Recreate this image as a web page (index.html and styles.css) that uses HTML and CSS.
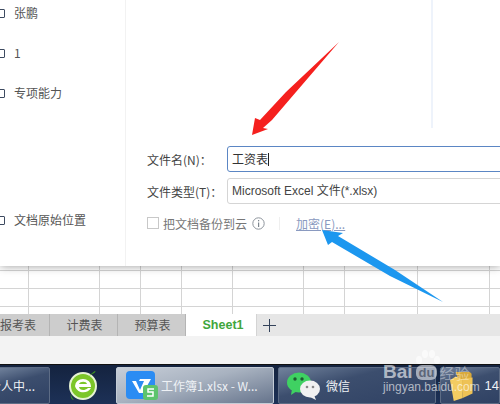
FILE: index.html
```html
<!DOCTYPE html>
<html lang="zh-CN">
<head>
  <meta charset="UTF-8">
  <meta name="viewport" content="width=device-width, initial-scale=1.0">
  <title>工资表</title>
  <link rel="stylesheet" href="styles.css">
</head>
<body>
  <div class="dialog">
    <ul class="places">
      <li class="place"><span class="box"></span>张鹏</li>
      <li class="place"><span class="box"></span>1</li>
      <li class="place"><span class="box"></span>专项能力</li>
      <li class="place place-last"><span class="box"></span>文档原始位置</li>
    </ul>
    <div class="save-panel">
      <div class="preview"></div>
      <div class="form-row">
        <label class="form-label">文件名(N)：</label>
        <div class="field field-active">工资表<span class="caret"></span></div>
      </div>
      <div class="form-row">
        <label class="form-label">文件类型(T)：</label>
        <div class="field field-type">Microsoft Excel 文件(*.xlsx)</div>
      </div>
      <div class="options">
        <span class="check"></span>
        <span class="check-label">把文档备份到云</span>
        <svg class="info" width="13" height="13" viewBox="0 0 13 13">
          <circle cx="6.5" cy="6.5" r="5.7" fill="none" stroke="#8d949c" stroke-width="1"/>
          <rect x="6" y="5.5" width="1.2" height="4.5" fill="#7d858e"/>
          <rect x="6" y="3" width="1.2" height="1.3" fill="#7d858e"/>
        </svg>
        <span class="divider"></span>
        <a class="encrypt" href="#">加密(E)...</a>
      </div>
    </div>
  </div>

  <div class="grid">
    <div class="col col-a"></div>
    <div class="col col-b"></div>
    <div class="col col-c"></div>
    <div class="col col-d"></div>
    <div class="col col-e"></div>
    <div class="col col-f"></div>
    <div class="col col-g"></div>
    <div class="col col-h"></div>
    <div class="col col-i"></div>
    <div class="col col-j"></div>
  </div>

  <div class="tabs">
    <div class="tab tab-1">报考表</div>
    <div class="tab tab-2">计费表</div>
    <div class="tab tab-3">预算表</div>
    <div class="tab tab-active">Sheet1</div>
    <div class="tab-add">
      <svg width="13" height="13" viewBox="0 0 13 13">
        <path d="M6.5 0v13M0 6.5h13" stroke="#33425a" stroke-width="1"/>
      </svg>
    </div>
  </div>
  <div class="status"></div>

  <div class="taskbar">
    <div class="task task-first">个人中...</div>
    <div class="quick">
      <svg width="30" height="32" viewBox="0 0 30 32">
        <circle cx="15" cy="16" r="13" fill="#7cc629"/>
        <circle cx="15" cy="16" r="13" fill="none" stroke="#e6f3d4" stroke-width="2"/>
        <path d="M7 16a8 7 0 0 1 16 0v1H11c.5 3 5 4.500 9 1h3c-3 6-14 6-16-2zM11 14h8c-.5-3-7-3-8 0z" fill="#fff"/>
        <path d="M27 1c2 1-3 3-6 5 2-2 4-4 6-5zM3 24c-1 3 1 6 3 6-1-1-3-3-3-6z" fill="#3d9a1e"/>
      </svg>
    </div>
    <div class="task task-active">
      <svg class="wps" width="32" height="30" viewBox="0 0 32 30">
        <rect x="0" y="0" width="29" height="28" rx="4" fill="#2b8cf3"/>
        <path d="M6 10h4l4 9 4-9h-5l1-2h11l-8 14h-4z" fill="#fff"/>
        <rect x="17" y="14" width="15" height="15" rx="3" fill="#5cc46c"/>
        <path d="M28 18h-6v3h5v4h-6" fill="none" stroke="#fff" stroke-width="1.500"/>
      </svg>
      <span>工作簿1.xlsx - W...</span>
    </div>
    <div class="task task-chat">
      <svg width="33" height="28" viewBox="0 0 33 28">
        <ellipse cx="12" cy="10.500" rx="12" ry="10" fill="#3fd162"/>
        <path d="M5 17l-1 6 6-4z" fill="#3fd162"/>
        <circle cx="8" cy="7" r="1.700" fill="#1d5a31"/>
        <circle cx="15" cy="7" r="1.700" fill="#1d5a31"/>
        <ellipse cx="23" cy="17" rx="10" ry="8.500" fill="#f1f1f1"/>
        <path d="M27 23l2 5-6-3z" fill="#f1f1f1"/>
        <circle cx="20" cy="15" r="1.300" fill="#888"/>
        <circle cx="26" cy="15" r="1.300" fill="#888"/>
      </svg>
      <span>微信</span>
    </div>
    <div class="task task-folder">
      <svg width="24" height="32" viewBox="0 0 24 32">
        <path d="M6 1h15l2 2v20l-8 4z" fill="#d9a93a"/>
        <path d="M0 10l6-4 7 3v20l-9 3z" fill="#f3cc62"/>
        <path d="M13 8l11-1v17l-11 5z" fill="#eec255"/>
      </svg>
      <span>14</span>
    </div>
  </div>

  <svg class="marks" width="500" height="404" viewBox="0 0 500 404">
    <path d="M339 42L296 92 272 120 263 128 268 129 252 135 255 118 260 120 286 92z" fill="#f5201e"/>
    <path d="M443 302L395 270 338 236 343 233 322 230 328 245 332 242 390 276z" fill="#1c97ef"/>
  </svg>

  <div class="watermark">
    <svg class="paw" width="26" height="16" viewBox="0 0 26 16">
      <ellipse cx="4" cy="11" rx="3" ry="4"/>
      <ellipse cx="10" cy="5" rx="3" ry="4"/>
      <ellipse cx="17" cy="5" rx="3" ry="4"/>
      <ellipse cx="22" cy="11" rx="3" ry="4"/>
    </svg>
    <div class="brand">
      <span class="brand-bai">Bai</span>
      <span class="brand-du">du</span>
      <span class="brand-cn">经验</span>
    </div>
    <div class="brand-url">jingyan.baidu.com</div>
  </div>
</body>
</html>
```
FILE: styles.css
```css
* {
  box-sizing: border-box;
}
body {
  width: 500px;
  height: 404px;
  margin: 0;
  overflow: hidden;
  position: relative;
  display: flex;
  flex-direction: column;
  background: #f3f3f3;
  font-family: "Noto Sans CJK SC", "Liberation Sans", sans-serif;
  font-size: 12px;
  color: #444;
}

/* save dialog */
.dialog {
  display: flex;
  height: 266px;
  flex: none;
  background: #fff;
  position: relative;
  z-index: 1;
  box-shadow: 0 0 9px rgba(0, 0, 0, 0.4);
}
.places {
  width: 126px;
  height: 266px;
  margin: 0;
  padding: 0;
  list-style: none;
  border-right: 1px solid #f2f2f2;
}
.place {
  display: flex;
  align-items: center;
  gap: 9px;
  height: 26px;
  margin-bottom: 14px;
  margin-left: -4px;
  line-height: 26px;
  color: #555;
}
.place-last {
  margin-top: 101px;
}
.box {
  width: 9px;
  height: 9px;
  border: 1px solid #3d4a60;
  border-radius: 1px;
}
.save-panel {
  flex: 1;
  min-width: 0;
  padding-left: 21px;
}
.preview {
  width: 286px;
  height: 128px;
  margin-bottom: 18px;
  border-right: 2px solid #eef3fb;
}
.form-row {
  display: flex;
  align-items: center;
  height: 26px;
  margin-bottom: 6px;
}
.form-label {
  width: 80px;
  flex: none;
  font-family: "Noto Sans CJK TC", "Noto Sans CJK SC", sans-serif;
  color: #444;
}
.field {
  flex: 1;
  height: 26px;
  margin-right: -6px;
  padding-left: 4px;
  border: 1px solid #d5d5d5;
  border-radius: 3px;
  line-height: 24px;
  color: #444;
}
.field-active {
  border-color: #5b86c4;
  color: #333;
}
.field-type {
  font-family: "Liberation Sans", "Noto Sans CJK SC", sans-serif;
}
.caret {
  display: inline-block;
  width: 1px;
  height: 13px;
  vertical-align: -2px;
  background: #222;
}
.options {
  display: flex;
  align-items: center;
  height: 14px;
  margin-top: 12px;
}
.check {
  width: 12px;
  height: 12px;
  border: 1px solid #c8c8c8;
}
.check-label {
  margin-left: 4px;
  color: #777;
}
.info {
  margin-left: 5px;
}
.divider {
  width: 1px;
  height: 13px;
  margin-left: 14px;
  background: #efefef;
}
.encrypt {
  margin-left: 16px;
  color: #8a9ac0;
  text-decoration: underline;
}

/* sheet cells */
.grid {
  display: flex;
  height: 48px;
  flex: none;
  background-color: #fff;
  background-image: repeating-linear-gradient(to bottom, #d4d4d4 0, #d4d4d4 1px, transparent 1px, transparent 18px);
  background-position: 0 4px;
}
.col {
  height: 100%;
  flex: none;
  border-right: 1px solid #d4d4d4;
}
.col-a { width: 29px; }
.col-b { width: 71px; }
.col-c { width: 41px; }
.col-d { width: 41px; }
.col-e { width: 51px; }
.col-f { width: 71px; }
.col-g { width: 41px; }
.col-h { width: 73px; }
.col-i { width: 72px; }
.col-j { width: 20px; border-right: 0; }

.tabs {
  display: flex;
  height: 22px;
  flex: none;
  background: #e6e6e6;
}
.tab {
  flex: none;
  background: #cdcdcd;
  border-right: 1px solid #b4b4b4;
  text-align: center;
  line-height: 22px;
  white-space: nowrap;
  color: #555;
}
.tab-1 { width: 50px; text-align: left; }
.tab-2 { width: 68px; padding-left: 2px; }
.tab-3 { width: 68px; padding-left: 2px; }
.tab-active {
  width: 71px;
  padding-left: 4px;
  background: #fff;
  border-right: 1px solid #d4d4d4;
  font-family: "Liberation Sans", sans-serif;
  font-weight: bold;
  font-size: 12.5px;
  color: #3fa63d;
}
.tab-add {
  display: flex;
  align-items: center;
  padding-left: 6px;
}
.status {
  height: 28px;
  flex: none;
  background: #f3f3f3;
}

/* windows taskbar */
.taskbar {
  display: flex;
  height: 40px;
  flex: none;
  padding: 2px 0 1px;
  border-top: 1px solid #111;
  background: linear-gradient(to bottom, #14233f, #1d3157);
  color: #fff;
}
.task {
  display: flex;
  align-items: center;
  flex: none;
  height: 37px;
  border: 1px solid #5d6c85;
  border-radius: 2px;
  background: linear-gradient(165deg, #71829c 0, #3c4e6e 38%, #2f4163 100%);
  color: #eef1f5;
}
.task-first {
  width: 53px;
  margin-left: -3px;
  justify-content: flex-end;
  padding-right: 14px;
  white-space: nowrap;
}
.quick {
  display: flex;
  align-items: center;
  justify-content: center;
  flex: none;
  width: 66px;
  height: 37px;
}
.task-active {
  width: 158px;
  padding-left: 9px;
  gap: 3px;
  border-color: #c4ccd6;
  background: linear-gradient(165deg, #c7ced8 0, #a8b2c0 45%, #66748c 100%);
}
.task-active span {
  white-space: nowrap;
}
.task-chat {
  width: 158px;
  margin-left: 4px;
  padding-left: 8px;
  gap: 6px;
}
.task-folder {
  width: 60px;
  margin-left: 4px;
  padding-left: 9px;
  gap: 12px;
  font-family: "Liberation Sans", sans-serif;
  font-size: 13px;
}

/* hand drawn arrows on top of the screenshot */
.marks {
  position: absolute;
  left: 0;
  top: 0;
  z-index: 2;
}

.watermark {
  position: absolute;
  left: 383px;
  top: 349px;
  width: 110px;
  z-index: 3;
  color: rgba(255, 255, 255, 0.62);
  font-family: "Liberation Sans", sans-serif;
}
.paw {
  position: absolute;
  left: 32px;
  top: 0;
  fill: rgba(255, 255, 255, 0.6);
}
.brand {
  position: absolute;
  left: 0;
  top: 12px;
  display: flex;
  align-items: center;
  height: 22px;
  white-space: nowrap;
}
.brand-bai {
  font-size: 19px;
  font-weight: bold;
}
.brand-du {
  margin-left: 3px;
  padding: 0 3px;
  border-radius: 6px;
  background: rgba(255, 255, 255, 0.55);
  font-size: 13px;
  font-weight: bold;
  line-height: 15px;
  color: rgba(60, 70, 90, 0.7);
}
.brand-cn {
  margin-left: 2px;
  font-family: "Noto Sans CJK SC", sans-serif;
  font-size: 15px;
  color: rgba(255, 255, 255, 0.4);
}
.brand-url {
  position: absolute;
  left: 0;
  top: 31px;
  font-size: 12px;
  line-height: 14px;
  white-space: nowrap;
}
```
